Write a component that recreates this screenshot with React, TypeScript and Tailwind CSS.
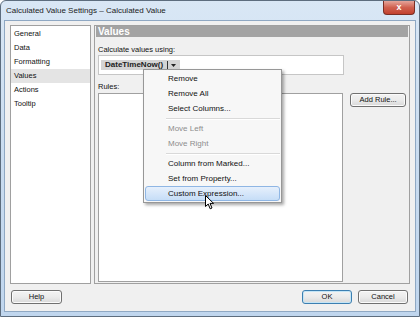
import React from "react";

const navItems = ["General", "Data", "Formatting", "Values", "Actions", "Tooltip"];

function Btn({ label, w, isDefault }: { label: string; w: string; isDefault?: boolean }) {
  return (
    <div
      className={`${w} h-[14px] rounded-[3px] border ${
        isDefault ? "border-[#3c7fb1] shadow-[inset_0_0_0_1px_#c4e5f6]" : "border-[#707070] shadow-[inset_0_0_0_1px_#fbfbfb]"
      } bg-linear-to-b from-[#f3f3f3] via-[#ebebeb] to-[#d8d8d8] flex items-center justify-center text-[7.5px] leading-none text-[#111]`}
    >
      {label}
    </div>
  );
}

function MenuItem({ label, disabled, active }: { label: string; disabled?: boolean; active?: boolean }) {
  return (
    <div
      className={`mx-[1px] h-[15px] border rounded-[3px] pl-[22px] text-[8px] leading-[13px] whitespace-nowrap ${
        active
          ? "border-[#8fb6e4] bg-linear-to-b from-[#e6f0fc] to-[#c6ddf7] text-[#111]"
          : "border-transparent"
      } ${disabled ? "text-[#8d8d8d]" : "text-[#111]"}`}
    >
      {label}
    </div>
  );
}

function MenuSep() {
  return (
    <div className="h-[5px] flex flex-col justify-center ml-[22px] mr-[1px]">
      <div className="h-[1px] bg-[#d9d9d9]" />
      <div className="h-[1px] bg-white" />
    </div>
  );
}

export default function App() {
  return (
    <div className="w-[420px] h-[317px] bg-white overflow-hidden relative font-['Liberation_Sans',Arial,sans-serif]">
      <div className="w-full h-full flex flex-col border border-[#5d6d7e] rounded-t-[6px] bg-linear-to-b from-[#d9e7f5] via-[#c9dcf0] to-[#c0d6ee]">
        {/* Title bar */}
        <div className="h-[19px] flex items-start shrink-0">
          <div className="pl-[5px] pt-[5px] text-[8px] leading-[10px] text-[#1a1a1a]">
            Calculated Value Settings – Calculated Value
          </div>
          <div className="ml-auto mr-[4px] w-[32px] h-[14px] rounded-b-[4px] border border-t-0 border-[#7a2e24] bg-linear-to-b from-[#e4a59b] via-[#d0604f] to-[#c2412d] flex items-center justify-center">
            <span className="text-white text-[9px] font-bold leading-none">x</span>
          </div>
        </div>

        {/* Client area */}
        <div className="flex-1 mx-[3px] mb-[4px] border border-[#8fa8c3] bg-[#f0f0f0] flex flex-col min-h-0">
          <div className="flex-1 flex pt-[4px] pl-[5px] pr-[5px] gap-[3px] min-h-0">
            {/* Nav list */}
            <div className="w-[81px] border border-[#a0a0a0] bg-white pt-[1px]">
              {navItems.map((n) => (
                <div
                  key={n}
                  className={`h-[14px] leading-[14px] pl-[3px] text-[7.5px] text-[#111] ${
                    n === "Values" ? "bg-[#e4e4e4]" : ""
                  }`}
                >
                  {n}
                </div>
              ))}
            </div>

            {/* Values panel */}
            <div className="flex-1 border border-[#a0a0a0] flex flex-col min-w-0">
              <div className="mx-[1px] h-[11px] bg-[#a3a3a3] text-white font-bold text-[10px] leading-[11px] pl-[2px]">
                Values
              </div>
              <div className="flex-1 flex flex-col px-[3px] pb-[1px] min-h-0">
                <div className="mt-[8px] h-[10px] text-[7.5px] leading-[10px] text-[#111]">
                  Calculate values using:
                </div>
                <div className="w-[246px] h-[20px] border border-[#c6c6c6] bg-white flex items-center pl-[2px]">
                  <div className="h-[10px] bg-[#d4d4d4] flex items-center px-[4px]">
                    <span className="font-bold text-[8px] leading-none text-[#222]">DateTimeNow()</span>
                    <span className="w-[1px] h-[8px] bg-[#333] ml-[4px] mr-[3px]" />
                    <svg width="5" height="3" viewBox="0 0 5 3">
                      <path d="M0 0 L5 0 L2.5 3 Z" fill="#222" />
                    </svg>
                  </div>
                </div>
                <div className="mt-[7px] h-[10px] text-[7.5px] leading-[10px] text-[#111]">Rules:</div>
                <div className="mt-[1px] flex-1 flex gap-[7px] min-h-0">
                  <div className="w-[246px] border border-[#a0a0a0] bg-white" />
                  <Btn label="Add Rule..." w="w-[56px]" />
                </div>
              </div>
            </div>
          </div>

          {/* Bottom buttons */}
          <div className="flex items-start pt-[6px] pb-[7px] pl-[6px] pr-[7px] shrink-0">
            <Btn label="Help" w="w-[51px]" />
            <div className="ml-auto flex gap-[6px]">
              <Btn label="OK" w="w-[50px]" isDefault />
              <Btn label="Cancel" w="w-[50px]" />
            </div>
          </div>
        </div>
      </div>

      {/* Context menu */}
      <div className="absolute left-[143px] top-[69px] w-[139px] border border-[#979797] bg-[#f7f7f7] py-[1px] shadow-[2px_2px_3px_rgba(0,0,0,0.35)]">
        <MenuItem label="Remove" />
        <MenuItem label="Remove All" />
        <MenuItem label="Select Columns..." />
        <MenuSep />
        <MenuItem label="Move Left" disabled />
        <MenuItem label="Move Right" disabled />
        <MenuSep />
        <MenuItem label="Column from Marked..." />
        <MenuItem label="Set from Property..." />
        <MenuItem label="Custom Expression..." active />
      </div>

      {/* Mouse cursor */}
      <svg className="absolute left-[205px] top-[195px]" width="10" height="15" viewBox="0 0 10 15">
        <path
          d="M0.5 0.5 L0.5 11.5 L3.2 9 L5.2 13.8 L7 13 L5 8.4 L8.6 8.4 Z"
          fill="white"
          stroke="black"
          strokeWidth="1"
          strokeLinejoin="round"
        />
      </svg>
    </div>
  );
}
